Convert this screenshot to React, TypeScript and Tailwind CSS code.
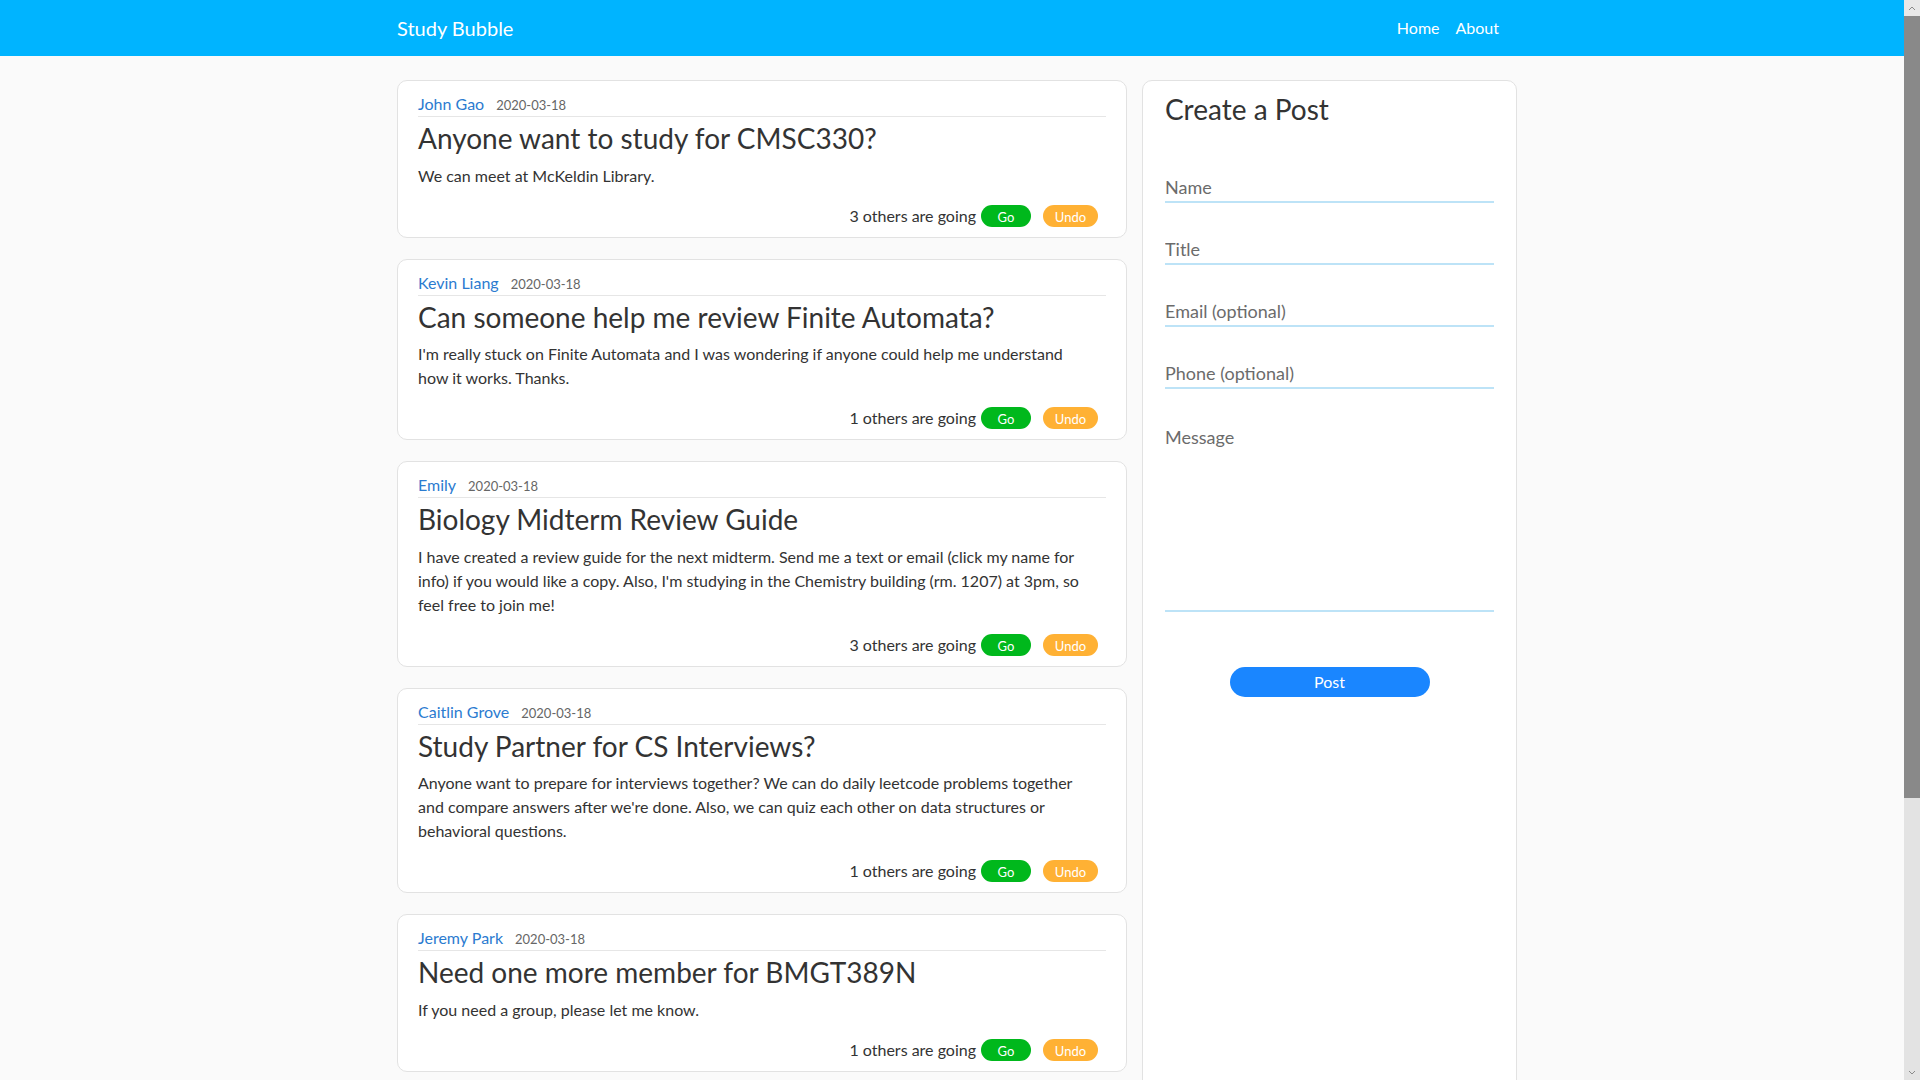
import React from 'react';

type Post = {
    name: string;
    date: string;
    title: string;
    body: string;
    going: number;
};

const posts: Post[] = [
    {
        name: 'John Gao',
        date: '2020-03-18',
        title: 'Anyone want to study for CMSC330?',
        body: 'We can meet at McKeldin Library.',
        going: 3,
    },
    {
        name: 'Kevin Liang',
        date: '2020-03-18',
        title: 'Can someone help me review Finite Automata?',
        body: "I'm really stuck on Finite Automata and I was wondering if anyone could help me understand\nhow it works. Thanks.",
        going: 1,
    },
    {
        name: 'Emily',
        date: '2020-03-18',
        title: 'Biology Midterm Review Guide',
        body: "I have created a review guide for the next midterm. Send me a text or email (click my name for\ninfo) if you would like a copy. Also, I'm studying in the Chemistry building (rm. 1207) at 3pm, so\nfeel free to join me!",
        going: 3,
    },
    {
        name: 'Caitlin Grove',
        date: '2020-03-18',
        title: 'Study Partner for CS Interviews?',
        body: "Anyone want to prepare for interviews together? We can do daily leetcode problems together\nand compare answers after we're done. Also, we can quiz each other on data structures or\nbehavioral questions.",
        going: 1,
    },
    {
        name: 'Jeremy Park',
        date: '2020-03-18',
        title: 'Need one more member for BMGT389N',
        body: 'If you need a group, please let me know.',
        going: 1,
    },
];

function PostCard({ post }: { post: Post }) {
    return (
        <div className="bg-white border border-[#e2e2e2] rounded-[10px] px-5 pt-[11px] pb-[9px] mb-[21px]">
            <div className="flex items-baseline gap-3 border-b border-[#e6e6e6]">
                <a className="text-[16px] leading-6 text-[#2b7bd0] cursor-pointer">{post.name}</a>
                <span className="text-[13px] text-[#666]">{post.date}</span>
            </div>
            <h3 className="text-[28px] leading-[1.2] mt-[5px] mb-2">{post.title}</h3>
            <p className="text-[16px] leading-6 mb-4 whitespace-pre-line">{post.body}</p>
            <div className="flex items-center justify-end text-[16px] leading-6">
                <span>{post.going} others are going</span>
                <button className="ml-[5px] w-[50px] h-[22px] rounded-full bg-[#00b81c] text-white text-[13px]">
                    Go
                </button>
                <button className="ml-[12px] mr-2 w-[55px] h-[22px] rounded-full bg-[#ffb134] text-white text-[13px]">
                    Undo
                </button>
            </div>
        </div>
    );
}

function CreatePost() {
    const field = "block w-full h-[30px] border-b-2 border-[#bde3f7] bg-transparent text-[18px] outline-none placeholder:text-[#6b6b6b]";

    return (
        <aside className="w-[375px] shrink-0 bg-white border border-[#e2e2e2] rounded-[10px] px-[22px] pt-3">
            <h3 className="text-[28px] leading-[1.2]">Create a Post</h3>
            <form onSubmit={(e) => e.preventDefault()}>
                <input type="text" placeholder="Name" className={`${field} mt-[46px]`} />
                <input type="text" placeholder="Title" className={`${field} mt-[32px]`} />
                <input type="text" placeholder="Email (optional)" className={`${field} mt-[32px]`} />
                <input type="text" placeholder="Phone (optional)" className={`${field} mt-[32px]`} />
                <textarea
                    placeholder="Message"
                    className="block w-full h-[189px] mt-[34px] pt-[2px] resize-none border-b-2 border-[#bde3f7] bg-transparent text-[18px] leading-6 outline-none placeholder:text-[#6b6b6b]"
                />
                <button className="block mx-auto mt-[55px] w-[200px] h-[30px] rounded-full bg-[#1a86ff] text-white text-[16px]">
                    Post
                </button>
            </form>
        </aside>
    );
}

// the window's scrollbar, as it shows in the screenshot
function ScrollStrip() {
    return (
        <div aria-hidden className="sticky top-0 w-4 h-screen shrink-0 flex flex-col bg-[#e3e3e3]">
            <div className="h-[16px] flex items-center justify-center bg-[#e8e8e8]">
                <svg width="8" height="5" viewBox="0 0 8 5" fill="none">
                    <path d="M1 4L4 1L7 4" stroke="#8a8a8a" strokeWidth="1" />
                </svg>
            </div>
            <div className="h-[782px] bg-[#898989]" />
            <div className="flex-1" />
            <div className="h-[16px] flex items-center justify-center">
                <svg width="8" height="5" viewBox="0 0 8 5" fill="none">
                    <path d="M1 1L4 4L7 1" stroke="#8a8a8a" strokeWidth="1" />
                </svg>
            </div>
        </div>
    );
}

export default function App() {
    return (
        <div className="flex items-start bg-[#fafafa] text-[#333] font-['Lato',sans-serif]">
            <div className="w-[1904px] shrink-0 min-h-screen">
                <nav className="bg-[#00b4ff] h-[56px]">
                    <div className="mx-auto max-w-[1140px] h-full px-[15px] flex items-center justify-between">
                        <a className="text-[20px] text-white cursor-pointer">Study Bubble</a>
                        <div className="flex text-[16px] text-white">
                            <a className="px-2 cursor-pointer">Home</a>
                            <a className="px-2 cursor-pointer">About</a>
                        </div>
                    </div>
                </nav>

                <main className="mx-auto max-w-[1140px] px-[15px] pt-[24px] pb-[360px] flex gap-[15px]">
                    <div className="w-[730px] shrink-0">
                        {posts.map((post) => (
                            <PostCard key={post.name} post={post} />
                        ))}
                    </div>
                    <CreatePost />
                </main>
            </div>
            <ScrollStrip />
        </div>
    );
}
